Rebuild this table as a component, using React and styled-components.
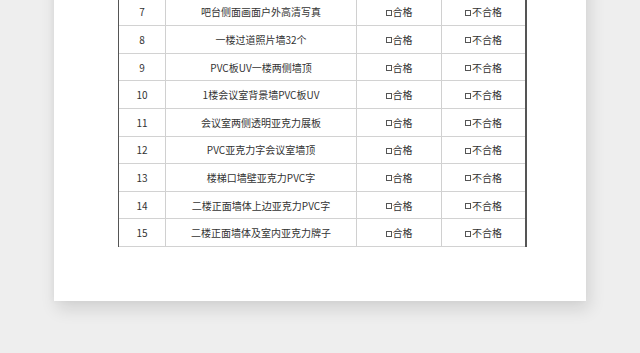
import React from "react";
import styled, { createGlobalStyle } from "styled-components";

const GlobalStyle = createGlobalStyle`
    html, body {
        margin: 0;
        padding: 0;
        background: #eeeeee;
        overflow: hidden;
    }
    body {
        font-family: "Noto Sans CJK SC", "Microsoft YaHei", sans-serif;
    }
`

const Stage = styled.div`
    width: 640px;
    height: 353px;
    overflow: hidden;
    background: #eeeeee;
`

const Paper = styled.div`
    width: 532px;
    margin-left: 54px;
    margin-top: -40px;
    padding: 38.6px 0 54px 64px;
    box-sizing: border-box;
    background: #fff;
    box-shadow: 3px 8px 16px rgba(0, 0, 0, 0.12), -2px 0 6px rgba(0, 0, 0, 0.03);
`

const Table = styled.div`
    width: 409px;
    border-left: 1px solid #555;
    border-right: 2px solid #555;
    box-sizing: border-box;
`

const Row = styled.div`
    display: grid;
    grid-template-columns: 47px 191px 85px 1fr;
    height: 27.6px;
    border-bottom: 1px solid #d2d2d2;
    box-sizing: border-box;
`

const Cell = styled.div`
    display: flex;
    align-items: center;
    justify-content: center;
    font-size: 10px;
    color: #333;
    border-right: ${p => (p.$last ? "none" : "1px solid #d0d0d0")};
    white-space: nowrap;
`

const Box = styled.span`
    display: inline-block;
    width: 4px;
    height: 4px;
    border: 1px solid #555;
    margin-right: 1px;
    margin-top: 2px;
`

const rows = [
    [7, "吧台侧面画面户外高清写真"],
    [8, "一楼过道照片墙32个"],
    [9, "PVC板UV一楼两侧墙顶"],
    [10, "1楼会议室背景墙PVC板UV"],
    [11, "会议室两侧透明亚克力展板"],
    [12, "PVC亚克力字会议室墙顶"],
    [13, "楼梯口墙壁亚克力PVC字"],
    [14, "二楼正面墙体上边亚克力PVC字"],
    [15, "二楼正面墙体及室内亚克力牌子"],
]

const App = () => {
    return <Stage>
        <GlobalStyle />
        <Paper>
            <Table>
                {rows.map(([num, name]) => (
                    <Row key={num}>
                        <Cell>{num}</Cell>
                        <Cell>{name}</Cell>
                        <Cell><Box />合格</Cell>
                        <Cell $last><Box />不合格</Cell>
                    </Row>
                ))}
            </Table>
        </Paper>
    </Stage>;
}

export default App;
